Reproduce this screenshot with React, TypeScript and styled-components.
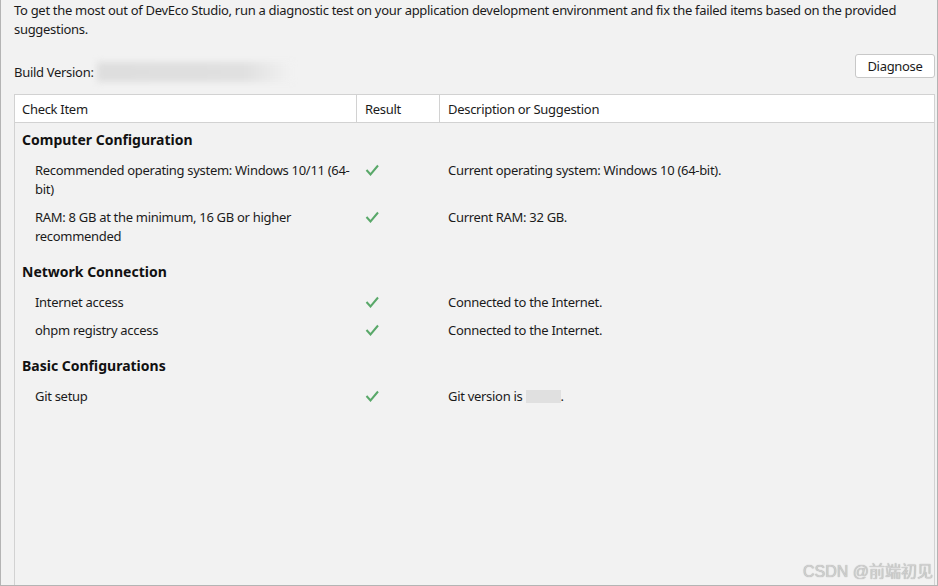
import styled, { createGlobalStyle } from 'styled-components'

const GlobalStyle = createGlobalStyle`
  html, body {
    margin: 0;
    padding: 0;
    background: #f2f2f2;
  }
  * {
    box-sizing: border-box;
  }
`

interface CheckRow {
  item: string
  description: string
  blurred?: boolean
}

interface CheckGroup {
  title: string
  rows: CheckRow[]
}

const groups: CheckGroup[] = [
  {
    title: 'Computer Configuration',
    rows: [
      {
        item: 'Recommended operating system: Windows 10/11 (64-bit)',
        description: 'Current operating system: Windows 10 (64-bit).'
      },
      {
        item: 'RAM: 8 GB at the minimum, 16 GB or higher recommended',
        description: 'Current RAM: 32 GB.'
      }
    ]
  },
  {
    title: 'Network Connection',
    rows: [
      { item: 'Internet access', description: 'Connected to the Internet.' },
      { item: 'ohpm registry access', description: 'Connected to the Internet.' }
    ]
  },
  {
    title: 'Basic Configurations',
    rows: [{ item: 'Git setup', description: 'Git version is ', blurred: true }]
  }
]

function CheckMark() {
  return (
    <svg width="14" height="12" viewBox="0 0 14 12">
      <polyline
        points="1.5,6 5.5,10.5 13,1.5"
        fill="none"
        stroke="#59a869"
        strokeWidth="2"
      />
    </svg>
  )
}

export default function App() {
  return (
    <>
      <GlobalStyle />
      <Frame>
        <Intro>
          To get the most out of DevEco Studio, run a diagnostic test on your application
          development environment and fix the failed items based on the provided suggestions.
        </Intro>
        <BuildBar>
          <BuildLabel>
            Build Version:
            <BlurredVersion />
          </BuildLabel>
          <DiagnoseButton>Diagnose</DiagnoseButton>
        </BuildBar>
        <Table>
          <HeaderRow>
            <HeaderCell>Check Item</HeaderCell>
            <HeaderCell>Result</HeaderCell>
            <HeaderCell>Description or Suggestion</HeaderCell>
          </HeaderRow>
          <Body>
            {groups.map((group, gi) => (
              <div key={group.title}>
                <GroupTitle $first={gi === 0}>{group.title}</GroupTitle>
                {group.rows.map((row) => (
                  <Row key={row.item}>
                    <ItemText>{row.item}</ItemText>
                    <ResultCell>
                      <CheckMark />
                    </ResultCell>
                    <Description>
                      {row.description}
                      {row.blurred && (
                        <>
                          <BlurredGit />.
                        </>
                      )}
                    </Description>
                  </Row>
                ))}
              </div>
            ))}
          </Body>
        </Table>
        <Watermark>CSDN @前端初见</Watermark>
      </Frame>
    </>
  )
}

const Frame = styled.div`
  position: relative;
  width: 938px;
  height: 586px;
  overflow: hidden;
  display: flex;
  flex-direction: column;
  padding: 1px 2px 0 13px;
  background: #f2f2f2;
  border: 1px solid #b4b4b4;
  border-top: none;
  font-family: 'Noto Sans', 'Open Sans', sans-serif;
  font-size: 13px;
  letter-spacing: -0.3px;
  color: #1b1b1b;
`

const Intro = styled.p`
  margin: 0;
  line-height: 19px;
  padding-right: 30px;
`

const BuildBar = styled.div`
  display: flex;
  justify-content: space-between;
  align-items: flex-end;
  margin-top: 8px;
  height: 34px;
  padding-bottom: 3px;
`

const BuildLabel = styled.div`
  display: flex;
  align-items: center;
  line-height: 19px;
  margin-bottom: -4px;
`

const BlurredVersion = styled.span`
  display: inline-block;
  width: 196px;
  height: 20px;
  margin-left: 3px;
  background: linear-gradient(90deg, #dedede 0%, #e0e0e0 75%, #f2f2f2 100%);
  filter: blur(3px);
`

const DiagnoseButton = styled.button`
  width: 80px;
  height: 24px;
  padding: 0;
  background: #ffffff;
  border: 1px solid #c8c8c8;
  border-radius: 3px;
  font-family: inherit;
  font-size: 13px;
  letter-spacing: inherit;
  color: #1b1b1b;
`

const Table = styled.div`
  flex: 1;
  margin-top: 13px;
  display: flex;
  flex-direction: column;
  border: 1px solid #d2d2d2;
  border-bottom: none;
`

const HeaderRow = styled.div`
  display: grid;
  grid-template-columns: 341px 83px 1fr;
  height: 28px;
  background: #ffffff;
  border-bottom: 1px solid #d2d2d2;
`

const HeaderCell = styled.div`
  display: flex;
  align-items: center;
  padding-left: 8px;
  border-left: 1px solid #d2d2d2;

  &:first-child {
    border-left: none;
    padding-left: 7px;
  }
`

const Body = styled.div`
  flex: 1;
`

const GroupTitle = styled.div<{ $first?: boolean }>`
  padding: ${({ $first }) => ($first ? '7px' : '12px')} 0 6px 7px;
  line-height: 20px;
  font-size: 14px;
  font-weight: 700;
  letter-spacing: 0;
  color: #111111;
`

const Row = styled.div`
  display: grid;
  grid-template-columns: 341px 83px 1fr;
  padding: 5px 0 4px;
  line-height: 19px;
`

const ItemText = styled.div`
  padding: 0 4px 0 20px;
`

const ResultCell = styled.div`
  padding: 3px 0 0 9px;
  line-height: 0;
`

const Description = styled.div`
  padding-left: 9px;
`

const BlurredGit = styled.span`
  display: inline-block;
  width: 35px;
  height: 13px;
  vertical-align: -2px;
  background: #e0e0e0;
`

const Watermark = styled.div`
  position: absolute;
  right: 4px;
  bottom: 3px;
  font-family: 'Liberation Sans', 'Noto Sans CJK SC', sans-serif;
  font-size: 16px;
  letter-spacing: 0;
  color: #cfcfcf;
  text-shadow: 0 0 1px #9a9a9a;
`
